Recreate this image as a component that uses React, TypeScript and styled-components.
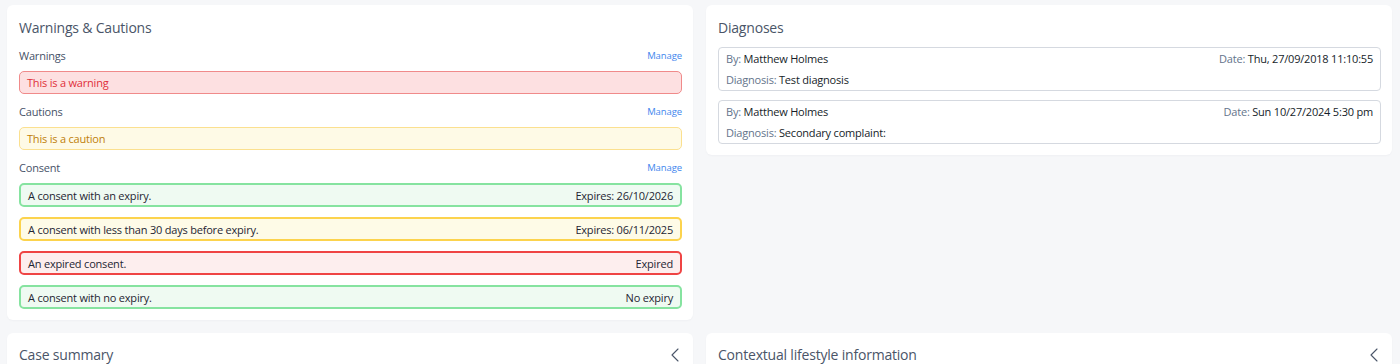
import styled, { createGlobalStyle } from "styled-components";
import { ChevronLeft } from "lucide-react";

const GlobalStyle = createGlobalStyle`
  body {
    margin: 0;
    background: #f6f7f9;
    font-family: "Open Sans", "Noto Sans", sans-serif;
    color: #2d3748;
  }
`;

type Tone = "red" | "yellow" | "green";

const tones: Record<Tone, { border: string; bg: string }> = {
  red: { border: "#ef4444", bg: "#fdeeee" },
  yellow: { border: "#fcd34d", bg: "#fefbe7" },
  green: { border: "#86e3a0", bg: "#effaf2" },
};

const Page = styled.div`
  display: grid;
  grid-template-columns: 1fr 1fr;
  column-gap: 13px;
  row-gap: 13px;
  padding: 5px 8px 0 7px;
  align-items: start;
`;

const Card = styled.section`
  background: #fff;
  border-radius: 6px;
  padding: 13px 11px 11px 12px;
  box-shadow: 0 1px 2px rgba(30, 41, 59, 0.03);
`;

const FoldCard = styled(Card)`
  padding-top: 12px;
`;

const CardHeader = styled.div`
  display: flex;
  align-items: center;
  justify-content: space-between;
  height: 20px;
  margin-bottom: 9px;
`;

const Title = styled.h2`
  margin: 0;
  font-size: 14px;
  letter-spacing: -0.2px;
  line-height: 20px;
  font-weight: 400;
  color: #4a5568;
`;

const SectionHead = styled.div`
  display: flex;
  align-items: center;
  justify-content: space-between;
  height: 16px;
  margin-bottom: 8px;
`;

const Label = styled.span`
  font-size: 11px;
  letter-spacing: -0.2px;
  color: #465268;
`;

const ManageLink = styled.a`
  font-size: 9.5px;
  letter-spacing: -0.1px;
  color: #3f86ee;
  text-decoration: none;
  cursor: pointer;
`;

const Section = styled.div`
  & + & {
    margin-top: 9px;
  }
`;

const Notice = styled.div<{ $tone: "warning" | "caution" }>`
  height: 23px;
  box-sizing: border-box;
  display: flex;
  align-items: center;
  padding: 0 7px;
  border-radius: 5px;
  font-size: 11px;
  letter-spacing: -0.2px;
  border: 1.5px solid ${(p) => (p.$tone === "warning" ? "#f08a8a" : "#fbe08f")};
  background: ${(p) => (p.$tone === "warning" ? "#fde0e1" : "#fefae6")};
  color: ${(p) => (p.$tone === "warning" ? "#e0303a" : "#bf800a")};
`;

const ConsentList = styled.div`
  display: flex;
  flex-direction: column;
  gap: 10px;
`;

const ConsentRow = styled.div<{ $tone: Tone }>`
  height: 24px;
  box-sizing: border-box;
  display: flex;
  align-items: center;
  justify-content: space-between;
  padding: 0 7px;
  border-radius: 5px;
  font-size: 11px;
  letter-spacing: -0.2px;
  color: #1f2633;
  border: 2px solid ${(p) => tones[p.$tone].border};
  background: ${(p) => tones[p.$tone].bg};
`;

const DiagnosisList = styled.div`
  display: flex;
  flex-direction: column;
  gap: 9px;
`;

const DiagnosisBox = styled.div`
  border: 1px solid #d5d9e0;
  border-radius: 4px;
  padding: 0 7px;
  font-size: 11px;
  letter-spacing: -0.2px;
`;

const DiagnosisLine = styled.div`
  display: flex;
  justify-content: space-between;
  line-height: 21px;
`;

const Key = styled.span`
  color: #64748b;
`;

const Value = styled.span`
  color: #161d29;
`;

const Chevron = styled(ChevronLeft)`
  color: #4a5568;
  margin-right: -5px;
`;

const consents: { text: string; expiry: string; tone: Tone }[] = [
  { text: "A consent with an expiry.", expiry: "Expires: 26/10/2026", tone: "green" },
  { text: "A consent with less than 30 days before expiry.", expiry: "Expires: 06/11/2025", tone: "yellow" },
  { text: "An expired consent.", expiry: "Expired", tone: "red" },
  { text: "A consent with no expiry.", expiry: "No expiry", tone: "green" },
];

const diagnoses = [
  { by: "Matthew Holmes", date: "Thu, 27/09/2018 11:10:55", diagnosis: "Test diagnosis" },
  { by: "Matthew Holmes", date: "Sun 10/27/2024 5:30 pm", diagnosis: "Secondary complaint:" },
];

const App = () => {
  return (
    <>
      <GlobalStyle />
      <Page>
        <Card>
          <CardHeader>
            <Title>Warnings &amp; Cautions</Title>
          </CardHeader>
          <Section>
            <SectionHead>
              <Label>Warnings</Label>
              <ManageLink>Manage</ManageLink>
            </SectionHead>
            <Notice $tone="warning">This is a warning</Notice>
          </Section>
          <Section>
            <SectionHead>
              <Label>Cautions</Label>
              <ManageLink>Manage</ManageLink>
            </SectionHead>
            <Notice $tone="caution">This is a caution</Notice>
          </Section>
          <Section>
            <SectionHead>
              <Label>Consent</Label>
              <ManageLink>Manage</ManageLink>
            </SectionHead>
            <ConsentList>
              {consents.map((c) => (
                <ConsentRow key={c.text} $tone={c.tone}>
                  <span>{c.text}</span>
                  <span>{c.expiry}</span>
                </ConsentRow>
              ))}
            </ConsentList>
          </Section>
        </Card>

        <Card>
          <CardHeader>
            <Title>Diagnoses</Title>
          </CardHeader>
          <DiagnosisList>
            {diagnoses.map((d) => (
              <DiagnosisBox key={d.date}>
                <DiagnosisLine>
                  <span>
                    <Key>By: </Key>
                    <Value>{d.by}</Value>
                  </span>
                  <span>
                    <Key>Date: </Key>
                    <Value>{d.date}</Value>
                  </span>
                </DiagnosisLine>
                <DiagnosisLine>
                  <span>
                    <Key>Diagnosis: </Key>
                    <Value>{d.diagnosis}</Value>
                  </span>
                </DiagnosisLine>
              </DiagnosisBox>
            ))}
          </DiagnosisList>
        </Card>

        <FoldCard>
          <CardHeader>
            <Title>Case summary</Title>
            <Chevron size={24} strokeWidth={1.1} />
          </CardHeader>
        </FoldCard>

        <FoldCard>
          <CardHeader>
            <Title>Contextual lifestyle information</Title>
            <Chevron size={24} strokeWidth={1.1} />
          </CardHeader>
        </FoldCard>
      </Page>
    </>
  );
};

export default App;
